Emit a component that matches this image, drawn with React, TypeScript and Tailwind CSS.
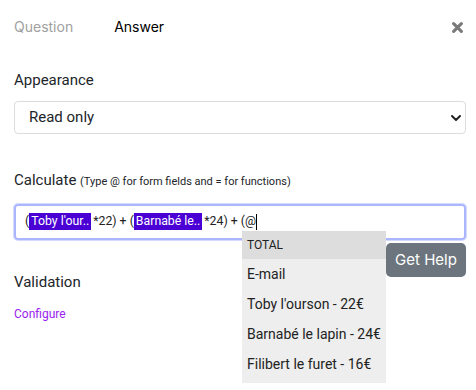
import React from "react";

export default function App() {
  const roboto = { fontFamily: "Roboto, 'Liberation Sans', sans-serif" };
  return (
    <div
      className="w-[476px] h-[390px] bg-white pl-[14px] pr-[10px] flex flex-col text-[#212529] overflow-hidden"
      style={roboto}
    >
      {/* Tabs */}
      <div className="mt-[17px] h-[20px] flex items-center text-[14px] leading-[20px]" style={{ fontFamily: "Inter, 'Open Sans', sans-serif" }}>
        <span className="text-[#a0a0a0]">Question</span>
        <span className="ml-[41px] text-black">Answer</span>
        <div className="ml-auto mr-[3px] flex items-center">
          <svg width="11" height="11" viewBox="0 0 10 10">
            <path d="M1.5 1.5 L8.5 8.5 M8.5 1.5 L1.5 8.5" stroke="#7a7a7a" strokeWidth="2.8" strokeLinecap="round" />
          </svg>
        </div>
      </div>

      {/* Appearance */}
      <div className="mt-[33px] text-[15px] leading-[20px]">Appearance</div>
      <div className="mt-[11px] h-[33px] border border-[#dcdcdc] rounded-[4px] flex items-center pl-[14px] pr-[3px] text-[15px]">
        <span>Read only</span>
        <svg className="ml-auto" width="12" height="12" viewBox="0 0 12 12">
          <path d="M2 4 L6 8 L10 4" stroke="#222" strokeWidth="2" fill="none" strokeLinecap="round" strokeLinejoin="round" />
        </svg>
      </div>

      {/* Calculate */}
      <div className="mt-[36px] text-[15px] leading-[20px]">
        Calculate <span className="text-[11px]">(Type @ for form fields and = for functions)</span>
      </div>
      <div className="relative mt-[12px]">
        <div className="h-[36px] border-2 border-[#aab6ff] rounded-[4px] shadow-[0_0_0_1px_rgba(170,182,255,0.5)] flex items-center pl-[9px] pb-[1px] text-[12.3px] text-[#222] whitespace-nowrap">
          <span>(</span>
          <span className="bg-[#4a00d4] text-white px-[2px] leading-[17px]">Toby l'our..</span>
          <span className="ml-[2px]">*22) + (</span>
          <span className="bg-[#4a00d4] text-white px-[2px] leading-[17px]">Barnabé le..</span>
          <span className="ml-[2px]">*24) + (@</span>
          <span className="w-[1px] h-[16px] bg-black" />
        </div>
        {/* Dropdown */}
        <div className="absolute left-[228px] top-[27px] w-[144px] bg-[#eeeeee] z-10 pb-[4px] text-[14px] text-[#222] whitespace-nowrap">
          <div className="h-[28px] bg-[#dddddd] flex items-center pl-[5px] text-[12px]">TOTAL</div>
          <div className="h-[30px] flex items-center pl-[5px]">E-mail</div>
          <div className="h-[30px] flex items-center pl-[5px]">Toby l'ourson - 22€</div>
          <div className="h-[30px] flex items-center pl-[5px]">Barnabé le lapin - 24€</div>
          <div className="h-[30px] flex items-center pl-[5px]">Filibert le furet - 16€</div>
        </div>
      </div>

      {/* Button + Validation */}
      <div className="mt-[3px] flex justify-between items-start">
        <div className="pt-[29px]">
          <div className="text-[15px] leading-[20px]">Validation</div>
          <div className="mt-[14px] text-[12px] leading-[16px] text-[#9a22f0]">Configure</div>
        </div>
        <div
          className="h-[34px] w-[80px] bg-[#6c757d] text-white rounded-[5px] flex items-center justify-center text-[15px]"
          style={{ fontFamily: "Inter, 'Open Sans', sans-serif" }}
        >
          Get Help
        </div>
      </div>
    </div>
  );
}
